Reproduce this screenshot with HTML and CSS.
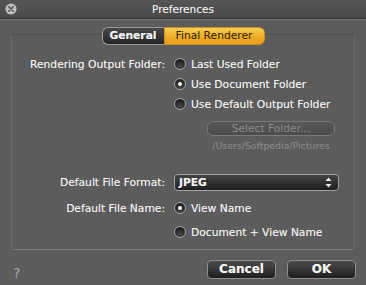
FILE: index.html
```html
<!DOCTYPE html>
<html>
<head>
<meta charset="utf-8">
<link rel="stylesheet" href="styles.css">
</head>
<body>
<div class="window">
  <div class="titlebar">
    <span class="close"><svg width="12" height="12" viewBox="0 0 12 12"><circle cx="6" cy="6" r="5.6" fill="#bdbdbd"/><path d="M3.8 3.8 L8.2 8.2 M8.2 3.8 L3.8 8.2" stroke="#555" stroke-width="1.6" stroke-linecap="round"/></svg></span>
    <span class="title">Preferences</span>
  </div>
  <div class="content">
    <div class="tabs">
      <span class="tab tab-general">General</span>
      <span class="tab tab-final">Final Renderer</span>
    </div>
    <div class="group">
      <div class="row">
        <span class="label">Rendering Output Folder:</span>
        <span class="radio"><span class="dot"></span>Last Used Folder</span>
      </div>
      <div class="row">
        <span class="label"></span>
        <span class="radio selected"><span class="dot"></span>Use Document Folder</span>
      </div>
      <div class="row">
        <span class="label"></span>
        <span class="radio"><span class="dot"></span>Use Default Output Folder</span>
      </div>
      <div class="folder">
        <span class="btn-disabled">Select Folder...</span>
        <span class="path">/Users/Softpedia/Pictures</span>
      </div>
      <div class="row row-format">
        <span class="label">Default File Format:</span>
        <span class="popup"><span>JPEG</span>
          <svg width="7" height="11" viewBox="0 0 7 11"><path d="M3.5 0.5 L6.5 4 L0.5 4 Z M3.5 10.5 L6.5 7 L0.5 7 Z" fill="#e8e8e8"/></svg>
        </span>
      </div>
      <div class="row row-name">
        <span class="label">Default File Name:</span>
        <span class="radio selected"><span class="dot"></span>View Name</span>
      </div>
      <div class="row row-name2">
        <span class="label"></span>
        <span class="radio"><span class="dot"></span>Document + View Name</span>
      </div>
    </div>
    <div class="footer">
      <span class="help">?</span>
      <div class="buttons">
        <span class="btn">Cancel</span>
        <span class="btn">OK</span>
      </div>
    </div>
  </div>
</div>
</body>
</html>
```

FILE: styles.css
```css
html, body {
  margin: 0;
  padding: 0;
  background: #5b5b5b;
}
.window {
  width: 366px;
  height: 285px;
  background: #5c5c5c;
  font-family: "DejaVu Sans", "Liberation Sans", sans-serif;
  font-size: 10.7px;
  color: #f2f2f2;
  overflow: hidden;
  text-shadow: 0 0 0.4px rgba(255, 255, 255, 0.5);
}
.titlebar {
  height: 18px;
  display: grid;
  grid-template-columns: 1fr;
  align-items: center;
  background: linear-gradient(#555555, #4a4a4a);
  border-bottom: 1px solid #2a2a2a;
  box-shadow: 0 1px 0 #7a7a7a;
}
.close {
  grid-row: 1;
  grid-column: 1;
  margin-left: 5px;
  width: 12px;
  height: 12px;
  display: flex;
}
.title {
  grid-row: 1;
  grid-column: 1;
  justify-self: center;
  font-size: 10.5px;
  color: #ececec;
}
.content {
  padding: 8px 11px 0 11px;
}
.tabs {
  position: relative;
  z-index: 1;
  display: flex;
  justify-content: center;
  height: 18px;
}
.tab {
  height: 16px;
  line-height: 16px;
  border: 1px solid #9a9a9a;
}
.tab-general {
  width: 61px;
  text-align: center;
  font-weight: bold;
  color: #f4f4f4;
  background: linear-gradient(#484848, #262626);
  border-radius: 6px 0 0 6px;
  border-right: none;
}
.tab-final {
  width: 99px;
  text-align: center;
  color: #2a2000;
  text-shadow: none;
  background: linear-gradient(#f8cf55, #eda923 60%, #e99f1c);
  border-color: #c98d20;
  border-radius: 0 6px 6px 0;
}
.group {
  margin-top: -11px;
  border: 1px solid #6c6c6c;
  border-top-color: #4e4e4e;
  border-bottom-color: #777;
  border-radius: 3px;
  padding-top: 19px;
  box-sizing: content-box;
  height: 195px;
  display: flex;
  flex-direction: column;
}
.row {
  display: flex;
  align-items: center;
  height: 20px;
}
.label {
  width: 153px;
  flex: none;
  text-align: right;
  margin-right: 9px;
}
.radio {
  display: flex;
  align-items: center;
  gap: 5px;
}
.dot {
  width: 10px;
  height: 10px;
  border-radius: 50%;
  border: 1px solid #a9a9a9;
  background: radial-gradient(circle at 50% 70%, #4a4a4a, #1e1e1e 70%);
  display: flex;
  align-items: center;
  justify-content: center;
}
.radio.selected .dot::after {
  content: "";
  width: 4px;
  height: 4px;
  border-radius: 50%;
  background: #f0f0f0;
}
.folder {
  margin-top: 7px;
  margin-left: 195px;
  width: 128px;
  display: flex;
  flex-direction: column;
  align-items: center;
}
.btn-disabled {
  width: 126px;
  height: 13px;
  line-height: 13px;
  text-align: center;
  border: 1px solid #7a7a7a;
  border-radius: 6px;
  background: linear-gradient(#575757, #4c4c4c);
  color: #8c8c8c;
  text-shadow: none;
}
.path {
  margin-top: 3px;
  line-height: 14px;
  font-size: 9.4px;
  color: #8f8f8f;
  text-shadow: none;
}
.row-format {
  margin-top: 21px;
  height: 17px;
}
.popup {
  height: 15px;
  border: 1px solid #a0a0a0;
  border-radius: 4px;
  background: linear-gradient(#444, #1e1e1e);
  display: flex;
  align-items: center;
  justify-content: space-between;
  padding: 0 6px 0 4px;
  box-sizing: content-box;
  width: 153px;
  font-weight: bold;
}
.popup svg {
  flex: none;
}
.row-name {
  margin-top: 7px;
}
.row-name2 {
  margin-top: 4px;
}
.footer {
  display: flex;
  justify-content: space-between;
  align-items: center;
  margin-top: 7px;
  padding-left: 2px;
  margin-right: -1px;
}
.help {
  font-size: 14px;
  color: #a8a8a8;
  text-shadow: none;
  margin-top: 8px;
}
.buttons {
  display: flex;
  gap: 11px;
}
.btn {
  width: 67px;
  height: 17px;
  line-height: 17px;
  text-align: center;
  border: 1px solid #8e8e8e;
  border-radius: 4px;
  background: linear-gradient(#4c4c4c, #1f1f1f);
  font-weight: bold;
  font-size: 12px;
  color: #f6f6f6;
}
```
